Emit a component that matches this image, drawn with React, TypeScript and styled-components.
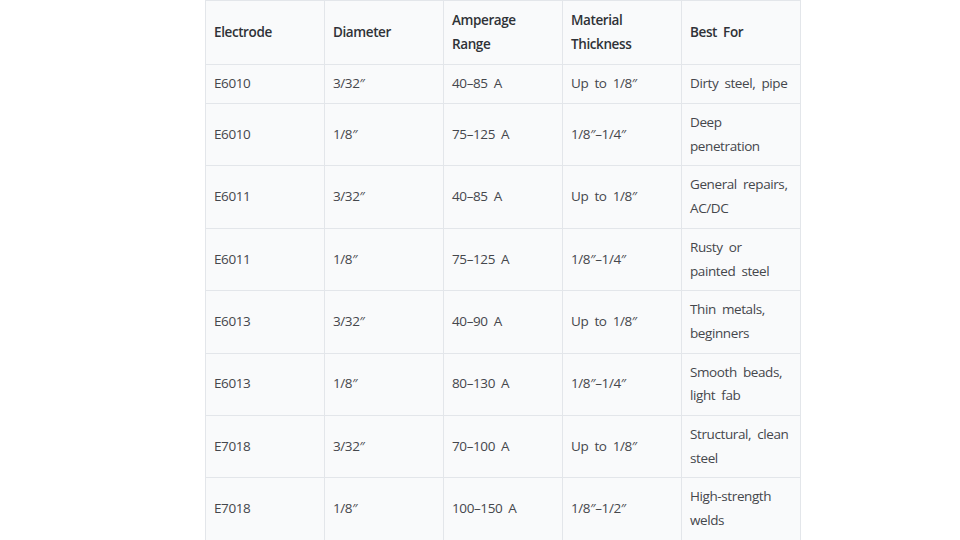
import styled, { createGlobalStyle } from "styled-components";

type rowType = {
    electrode: string;
    diameter: string;
    amperage: string;
    thickness: string;
    bestFor: string;
};

const rows: rowType[] = [
    { electrode: "E6010", diameter: "3/32″", amperage: "40–85 A", thickness: "Up to 1/8″", bestFor: "Dirty steel, pipe" },
    { electrode: "E6010", diameter: "1/8″", amperage: "75–125 A", thickness: "1/8″–1/4″", bestFor: "Deep penetration" },
    { electrode: "E6011", diameter: "3/32″", amperage: "40–85 A", thickness: "Up to 1/8″", bestFor: "General repairs, AC/DC" },
    { electrode: "E6011", diameter: "1/8″", amperage: "75–125 A", thickness: "1/8″–1/4″", bestFor: "Rusty or painted steel" },
    { electrode: "E6013", diameter: "3/32″", amperage: "40–90 A", thickness: "Up to 1/8″", bestFor: "Thin metals, beginners" },
    { electrode: "E6013", diameter: "1/8″", amperage: "80–130 A", thickness: "1/8″–1/4″", bestFor: "Smooth beads, light fab" },
    { electrode: "E7018", diameter: "3/32″", amperage: "70–100 A", thickness: "Up to 1/8″", bestFor: "Structural, clean steel" },
    { electrode: "E7018", diameter: "1/8″", amperage: "100–150 A", thickness: "1/8″–1/2″", bestFor: "High-strength welds" },
];

const headers = ["Electrode", "Diameter", "Amperage Range", "Material Thickness", "Best For"];

function App() {
    return (
        <>
            <GlobalStyle />
            <Page>
                <Table>
                    <colgroup>
                        {headers.map((h) => (
                            <Col key={h} />
                        ))}
                    </colgroup>
                    <thead>
                        <tr>
                            {headers.map((h) => (
                                <HeadCell key={h}>{h}</HeadCell>
                            ))}
                        </tr>
                    </thead>
                    <tbody>
                        {rows.map((r, i) => (
                            <Row key={i}>
                                <Cell>{r.electrode}</Cell>
                                <Cell>{r.diameter}</Cell>
                                <Cell>{r.amperage}</Cell>
                                <Cell>{r.thickness}</Cell>
                                <Cell>{r.bestFor}</Cell>
                            </Row>
                        ))}
                    </tbody>
                </Table>
            </Page>
        </>
    );
}

const GlobalStyle = createGlobalStyle`
    body {
        margin: 0;
        background: #ffffff;
        font-family: "Open Sans", "Noto Sans", sans-serif;
    }
`;

const Page = styled.div`
    padding-left: 205px;
`;

const Table = styled.table`
    border-collapse: collapse;
    table-layout: fixed;
    width: 596px;
    background: #f9fafb;
    font-size: 13.5px;
    line-height: 23.7px;
    letter-spacing: -0.4px;
    word-spacing: 3px;
`;

const Col = styled.col`
    width: 119px;
`;

const Row = styled.tr`
    height: 39px;
`;

const HeadCell = styled.th`
    border: 1px solid #e3e6ea;
    padding: 7px 8px;
    text-align: left;
    vertical-align: middle;
    font-weight: 600;
    color: #2f3237;
    height: 49px;
`;

const Cell = styled.td`
    border: 1px solid #e3e6ea;
    padding: 7px 8px;
    vertical-align: middle;
    color: #45474c;
`;

export default App;
